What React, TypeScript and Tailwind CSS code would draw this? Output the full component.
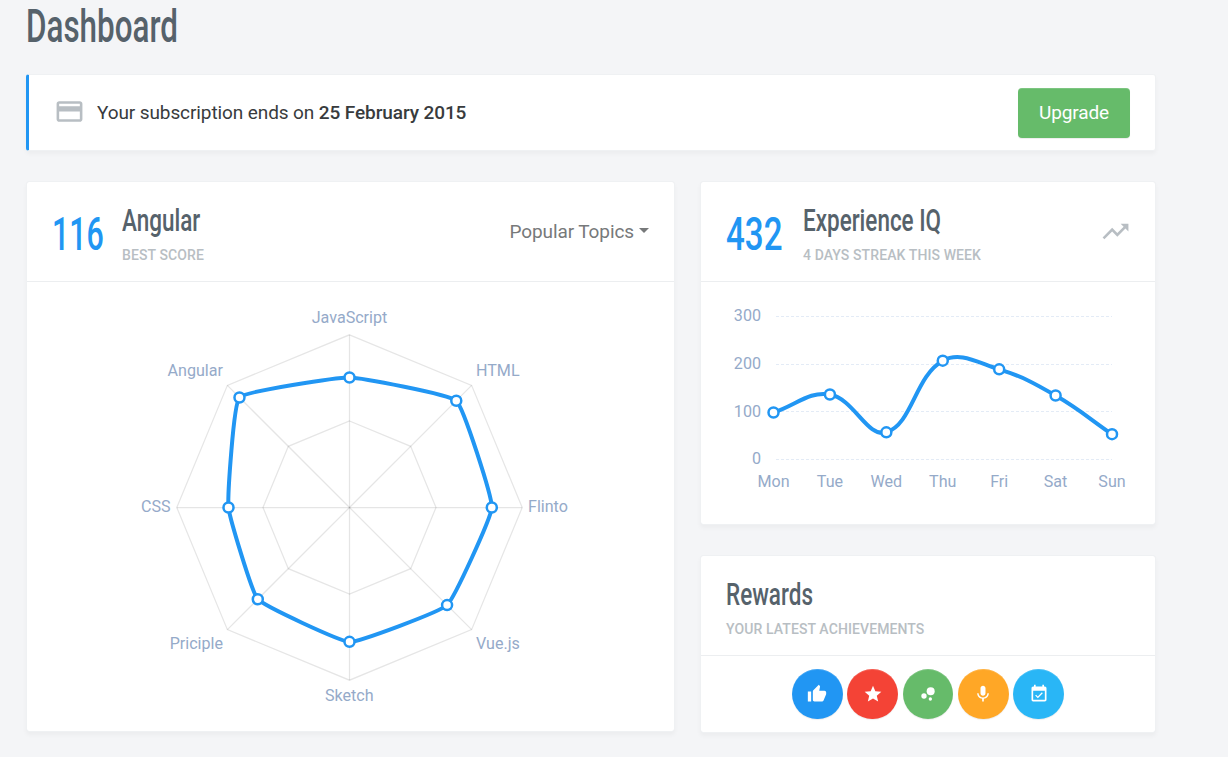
import React from "react";
import {
  MdCreditCard,
  MdTrendingUp,
  MdThumbUp,
  MdStar,
  MdBubbleChart,
  MdMic,
  MdEventAvailable,
} from "react-icons/md";

type Point = { x: number; y: number };

/* Control points of a smoothed curve at `cur`. */
function controls(prev: Point, cur: Point, next: Point, t: number) {
  const d01 = Math.hypot(cur.x - prev.x, cur.y - prev.y);
  const d12 = Math.hypot(next.x - cur.x, next.y - cur.y);
  const sum = d01 + d12 || 1;
  const fa = (t * d01) / sum;
  const fb = (t * d12) / sum;
  return {
    before: { x: cur.x - fa * (next.x - prev.x), y: cur.y - fa * (next.y - prev.y) },
    after: { x: cur.x + fb * (next.x - prev.x), y: cur.y + fb * (next.y - prev.y) },
  };
}

function smoothPath(points: Point[], tension: number, closed: boolean) {
  const n = points.length;
  const at = (i: number) => (closed ? points[(i + n) % n] : points[Math.min(n - 1, Math.max(0, i))]);
  let d = `M${at(0).x},${at(0).y}`;
  const last = closed ? n : n - 1;
  for (let i = 0; i < last; i++) {
    const a = controls(at(i - 1), at(i), at(i + 1), tension).after;
    const b = controls(at(i), at(i + 1), at(i + 2), tension).before;
    const p = at(i + 1);
    d += `C${a.x},${a.y} ${b.x},${b.y} ${p.x},${p.y}`;
  }
  return d;
}

function Dots({ points }: { points: Point[] }) {
  return (
    <>
      {points.map((p, i) => (
        <circle key={i} cx={p.x} cy={p.y} r={5} fill="#fff" stroke="#2196f3" strokeWidth={2.5} />
      ))}
    </>
  );
}

const topics = [
  { label: "JavaScript", r: 130, x: 322.5, y: 41, anchor: "middle" },
  { label: "HTML", r: 151, x: 449, y: 94, anchor: "start" },
  { label: "Flinto", r: 142.3, x: 501, y: 230, anchor: "start" },
  { label: "Vue.js", r: 138, x: 449, y: 367, anchor: "start" },
  { label: "Sketch", r: 134.3, x: 322.3, y: 419, anchor: "middle" },
  { label: "Priciple", r: 129.7, x: 196, y: 367, anchor: "end" },
  { label: "CSS", r: 121, x: 143.7, y: 230, anchor: "end" },
  { label: "Angular", r: 155.6, x: 196, y: 94, anchor: "end" },
] as const;

const CX = 322.5;
const CY = 225.5;

function polar(i: number, r: number): Point {
  const a = (Math.PI / 4) * i - Math.PI / 2;
  return { x: CX + r * Math.cos(a), y: CY + r * Math.sin(a) };
}

function RadarChart() {
  const ring = (r: number) => topics.map((_, i) => polar(i, r)).map((p) => `${p.x},${p.y}`).join(" ");
  const points = topics.map((t, i) => polar(i, t.r));
  return (
    <svg width="647" height="448" className="block font-[Roboto,sans-serif] text-[16.1px]">
      <g fill="none" stroke="#000" strokeOpacity={0.1} strokeWidth={1.25}>
        <polygon points={ring(86.5)} />
        <polygon points={ring(172.7)} />
        {topics.map((t, i) => {
          const p = polar(i, 172.7);
          return <line key={t.label} x1={CX} y1={CY} x2={p.x} y2={p.y} />;
        })}
      </g>
      <path d={smoothPath(points, 0.1, true)} fill="none" stroke="#2196f3" strokeWidth={4} />
      <Dots points={points} />
      {topics.map((t) => (
        <text key={t.label} x={t.x} y={t.y} textAnchor={t.anchor} fill="#95aac9">
          {t.label}
        </text>
      ))}
    </svg>
  );
}

const week = [
  { day: "Mon", y: 130.5 },
  { day: "Tue", y: 112.5 },
  { day: "Wed", y: 150.3 },
  { day: "Thu", y: 78.7 },
  { day: "Fri", y: 87.3 },
  { day: "Sat", y: 113.5 },
  { day: "Sun", y: 152.2 },
];

const levels = [
  { value: 300, y: 34.5, textY: 39 },
  { value: 200, y: 82.5, textY: 87 },
  { value: 100, y: 129.5, textY: 135 },
  { value: 0, y: 177.5, textY: 182 },
];

function LineChart() {
  const points = week.map((d, i) => ({ x: 72.5 + i * 56.42, y: d.y }));
  return (
    <svg width="454" height="241" className="block font-[Roboto,sans-serif] text-[16.1px]">
      {levels.map((l) => (
        <g key={l.value}>
          <line x1={75} x2={411} y1={l.y} y2={l.y} stroke="#e3ebf6" strokeDasharray="3 2" />
          <text x={60} y={l.textY} textAnchor="end" fill="#95aac9">
            {l.value}
          </text>
        </g>
      ))}
      <path d={smoothPath(points, 0.4, false)} fill="none" stroke="#2196f3" strokeWidth={4} />
      <Dots points={points} />
      {week.map((d, i) => (
        <text key={d.day} x={points[i].x} y={204.5} textAnchor="middle" fill="#95aac9">
          {d.day}
        </text>
      ))}
    </svg>
  );
}

const cardClass =
  "rounded-[3px] border border-[#eff1f3] bg-white bg-clip-padding shadow-[0_3px_4px_rgba(0,0,0,0.035)]";
const titleClass =
  "block origin-left scale-x-[0.725] whitespace-nowrap font-[Roboto,sans-serif] text-[31px] font-medium leading-[39px] text-[#56626b]";
const subtitleClass =
  "mt-[5px] whitespace-nowrap text-[14px] font-medium leading-5 tracking-[0.1px] text-[#b8bec3]";
const scoreClass =
  "block origin-left whitespace-nowrap text-[46px] font-medium leading-[50px] text-[#2196f3]";

const rewards = [
  { name: "likes", Icon: MdThumbUp, color: "bg-[#2196f3]" },
  { name: "star", Icon: MdStar, color: "bg-[#f44336]" },
  { name: "bubbles", Icon: MdBubbleChart, color: "bg-[#66bb6a]" },
  { name: "voice", Icon: MdMic, color: "bg-[#ffa726]" },
  { name: "attendance", Icon: MdEventAvailable, color: "bg-[#29b6f6]" },
];

export default function App() {
  return (
    <div className="h-[757px] w-[1228px] overflow-hidden bg-[#f4f5f7] pl-[26px] pr-[72px] font-[Roboto,sans-serif]">
      <h1 className="h-[74px] pt-px">
        <span className="block w-[300px] origin-left scale-x-[0.683] text-[46px] font-medium leading-[50px] text-[#56626b]">
          Dashboard
        </span>
      </h1>

      <section className="flex h-[77px] items-center rounded-[3px] border border-l-[3px] border-[#eff1f3] border-l-[#2196f3] bg-white pl-[25px] pr-[25px] shadow-[0_3px_4px_rgba(0,0,0,0.035)]">
        <MdCreditCard className="mb-[3px] size-[31px] shrink-0 text-[#b8bec3]" />
        <p className="ml-[12px] flex-1 text-[19px] leading-7 tracking-[-0.1px] text-[#383b3d]">
          Your subscription ends on <span className="font-medium">25 February 2015</span>
        </p>
        <button className="h-[50px] w-28 rounded bg-[#66bb6a] pt-px text-[19px] tracking-[-0.1px] text-white shadow-[inset_0_1px_0_rgba(255,255,255,0.15),0_1px_1px_rgba(0,0,0,0.075)]">
          Upgrade
        </button>
      </section>

      <div className="mt-[30px] flex items-start gap-[25px]">
        <section className={`${cardClass} h-[551px] w-[649px] shrink-0`}>
          <header className="flex h-[100px] border-b border-[#eceef0] pl-[25px] pr-[25px]">
            <div className="w-[70px] pt-[27px]">
              <span className={`${scoreClass} scale-x-[0.66]`}>116</span>
            </div>
            <div className="flex-1 pt-[19px]">
              <h2 className={titleClass}>Angular</h2>
              <p className={subtitleClass}>BEST SCORE</p>
            </div>
            <button className="flex items-center gap-[5px] pt-px text-[19px] tracking-[-0.1px] text-[#77797a]">
              Popular Topics
              <svg width="10" height="5" viewBox="0 0 10 5" fill="currentColor" className="mb-[3px]">
                <path d="M0 0h10L5 5z" />
              </svg>
            </button>
          </header>
          <RadarChart />
        </section>

        <div className="flex w-[456px] shrink-0 flex-col gap-[30px]">
          <section className={`${cardClass} h-[344px]`}>
            <header className="flex h-[100px] items-center border-b border-[#eceef0] pl-[25px] pr-[24px]">
              <div className="w-[77px] self-start pt-[27px]">
                <span className={`${scoreClass} scale-x-[0.72]`}>432</span>
              </div>
              <div className="flex-1 self-start pt-[19px]">
                <h2 className={titleClass}>Experience IQ</h2>
                <p className={subtitleClass}>4 DAYS STREAK THIS WEEK</p>
              </div>
              <MdTrendingUp className="size-[31px] text-[#b8bec3]" />
            </header>
            <LineChart />
          </section>

          <section className={`${cardClass} h-[178px]`}>
            <header className="h-[100px] border-b border-[#eceef0] pl-[25px] pt-[19px]">
              <h2 className={titleClass}>Rewards</h2>
              <p className={subtitleClass}>YOUR LATEST ACHIEVEMENTS</p>
            </header>
            <div className="flex justify-center gap-[4.5px] pt-[13px]">
              {rewards.map(({ name, Icon, color }) => (
                <button
                  key={name}
                  className={`flex h-[50px] w-[50.8px] items-center justify-center rounded-full text-white shadow-[inset_0_1px_0_rgba(255,255,255,0.15),0_1px_1px_rgba(0,0,0,0.075)] ${color}`}
                >
                  <Icon className="size-5" />
                </button>
              ))}
            </div>
          </section>
        </div>
      </div>
    </div>
  );
}
